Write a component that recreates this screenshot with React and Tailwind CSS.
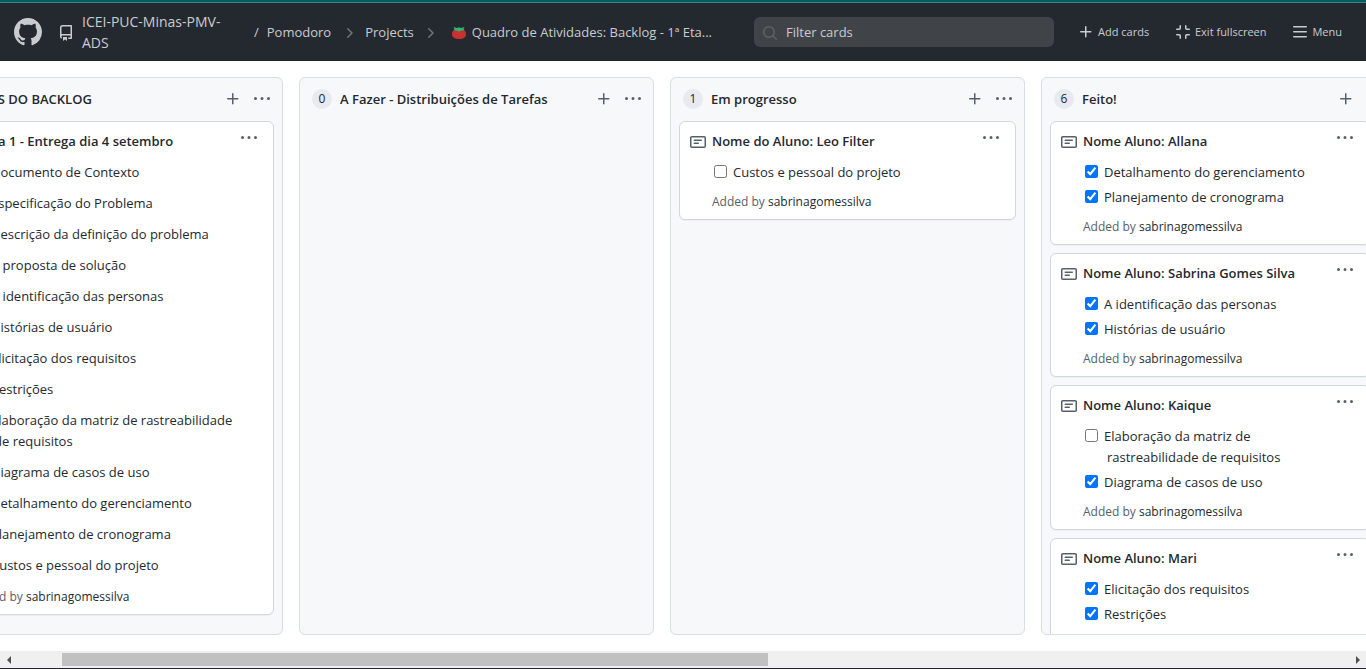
import React from "react";

const PATHS = {
  github:
    "M8 0C3.58 0 0 3.58 0 8c0 3.54 2.29 6.53 5.47 7.59.4.07.55-.17.55-.38 0-.19-.01-.82-.01-1.49-2.01.37-2.53-.49-2.69-.94-.09-.23-.48-.94-.82-1.13-.28-.15-.68-.52-.01-.53.63-.01 1.08.58 1.23.82.72 1.21 1.87.87 2.33.66.07-.52.28-.87.51-1.07-1.78-.2-3.64-.89-3.64-3.95 0-.87.31-1.59.82-2.15-.08-.2-.36-1.02.08-2.12 0 0 .67-.21 2.2.82.64-.18 1.32-.27 2-.27.68 0 1.36.09 2 .27 1.53-1.04 2.2-.82 2.2-.82.44 1.1.16 1.92.08 2.12.51.56.82 1.27.82 2.15 0 3.07-1.87 3.75-3.65 3.95.29.25.54.73.54 1.48 0 1.07-.01 1.93-.01 2.2 0 .21.15.46.55.38A8.013 8.013 0 0016 8c0-4.42-3.58-8-8-8z",
  repo:
    "M2 2.5A2.5 2.5 0 014.5 0h8.75a.75.75 0 01.75.75v12.5a.75.75 0 01-.75.75h-2.5a.75.75 0 110-1.5h1.75v-2h-8a1 1 0 00-.714 1.7.75.75 0 01-1.072 1.05A2.495 2.495 0 012 11.5v-9zm10.5-1V9h-8c-.356 0-.694.074-1 .208V2.5a1 1 0 011-1h8zM5 12.25v3.25a.25.25 0 00.4.2l1.45-1.087a.25.25 0 01.3 0L8.6 15.7a.25.25 0 00.4-.2v-3.25a.25.25 0 00-.25-.25h-3.5a.25.25 0 00-.25.25z",
  plus:
    "M7.75 2a.75.75 0 01.75.75V7h4.25a.75.75 0 110 1.5H8.5v4.25a.75.75 0 11-1.5 0V8.5H2.75a.75.75 0 010-1.5H7V2.75A.75.75 0 017.75 2z",
  kebab:
    "M8 9a1.5 1.5 0 100-3 1.5 1.5 0 000 3zM1.5 9a1.5 1.5 0 100-3 1.5 1.5 0 000 3zm13 0a1.5 1.5 0 100-3 1.5 1.5 0 000 3z",
  note:
    "M0 3.75C0 2.784.784 2 1.75 2h12.5c.966 0 1.75.784 1.75 1.75v8.5A1.75 1.75 0 0114.25 14H1.75A1.75 1.75 0 010 12.25v-8.5zm1.75-.25a.25.25 0 00-.25.25v8.5c0 .138.112.25.25.25h12.5a.25.25 0 00.25-.25v-8.5a.25.25 0 00-.25-.25H1.75zM3.5 6.25a.75.75 0 01.75-.75h7a.75.75 0 010 1.5h-7a.75.75 0 01-.75-.75zm.75 2.25a.75.75 0 000 1.5h4a.75.75 0 000-1.5h-4z",
  search:
    "M11.5 7a4.499 4.499 0 11-8.998 0A4.499 4.499 0 0111.5 7zm-.82 4.74a6 6 0 111.06-1.06l3.04 3.04a.75.75 0 11-1.06 1.06l-3.04-3.04z",
  exit:
    "M10.75 1a.75.75 0 01.75.75v2.5c0 .138.112.25.25.25h2.5a.75.75 0 010 1.5h-2.5A1.75 1.75 0 0110 4.25v-2.5a.75.75 0 01.75-.75zm-5.5 0a.75.75 0 01.75.75v2.5A1.75 1.75 0 014.25 6h-2.5a.75.75 0 010-1.5h2.5a.25.25 0 00.25-.25v-2.5A.75.75 0 015.25 1zM1 10.75a.75.75 0 01.75-.75h2.5c.966 0 1.75.784 1.75 1.75v2.5a.75.75 0 01-1.5 0v-2.5a.25.25 0 00-.25-.25h-2.5a.75.75 0 01-.75-.75zm9 1c0-.966.784-1.75 1.75-1.75h2.5a.75.75 0 010 1.5h-2.5a.25.25 0 00-.25.25v2.5a.75.75 0 01-1.5 0v-2.5z",
  bars:
    "M1 2.75A.75.75 0 011.75 2h12.5a.75.75 0 110 1.5H1.75A.75.75 0 011 2.75zm0 5A.75.75 0 011.75 7h12.5a.75.75 0 110 1.5H1.75A.75.75 0 011 7.75zM1.75 12a.75.75 0 100 1.5h12.5a.75.75 0 100-1.5H1.75z",
  chevron:
    "M6.22 3.22a.75.75 0 011.06 0l4.25 4.25a.75.75 0 010 1.06l-4.25 4.25a.75.75 0 01-1.06-1.06L9.94 8 6.22 4.28a.75.75 0 010-1.06z",
};

function Icon({ name, className = "size-4" }) {
  return (
    <svg viewBox="0 0 16 16" fill="currentColor" aria-hidden="true" className={`shrink-0 ${className}`}>
      <path fillRule="evenodd" d={PATHS[name]} />
    </svg>
  );
}

function Tomato() {
  return (
    <svg viewBox="0 0 14 12" aria-hidden="true" className="h-3 w-3.5 shrink-0">
      <path d="M0 7C0 4.500 1.500 3 4 3h6c2.500 0 4 1.500 4 4 0 3.200-2.400 5-7 5S0 10.200 0 7z" fill="#c6322f" />
      <path d="M1.500 0 5 1 7 .3l2 .7 3.500-1-1 1.900 1.200 1.700-3-.2L7 4.600 4.500 3.400l-3.200.2 1.200-1.700z" fill="#2fb574" />
    </svg>
  );
}

const COLUMNS = [
  {
    count: 1,
    title: "ITENS DO BACKLOG",
    cards: [
      {
        title: "Etapa 1 - Entrega dia 4 setembro",
        loose: true,
        tasks: [
          ["Documento de Contexto", false],
          ["Especificação do Problema", false],
          ["Descrição da definição do problema", false],
          ["A proposta de solução", false],
          ["A identificação das personas", false],
          ["Histórias de usuário", false],
          ["Elicitação dos requisitos", false],
          ["Restrições", false],
          ["Elaboração da matriz de rastreabilidade de requisitos", false],
          ["Diagrama de casos de uso", false],
          ["Detalhamento do gerenciamento", false],
          ["Planejamento de cronograma", false],
          ["Custos e pessoal do projeto", false],
        ],
      },
    ],
  },
  { count: 0, title: "A Fazer - Distribuições de Tarefas", cards: [] },
  {
    count: 1,
    title: "Em progresso",
    cards: [{ title: "Nome do Aluno: Leo Filter", tasks: [["Custos e pessoal do projeto", false]] }],
  },
  {
    count: 6,
    title: "Feito!",
    scrolls: true,
    cards: [
      {
        title: "Nome Aluno: Allana",
        tasks: [
          ["Detalhamento do gerenciamento", true],
          ["Planejamento de cronograma", true],
        ],
      },
      {
        title: "Nome Aluno: Sabrina Gomes Silva",
        tasks: [
          ["A identificação das personas", true],
          ["Histórias de usuário", true],
        ],
      },
      {
        title: "Nome Aluno: Kaique",
        tasks: [
          ["Elaboração da matriz de rastreabilidade de requisitos", false],
          ["Diagrama de casos de uso", true],
        ],
      },
      {
        title: "Nome Aluno: Mari",
        tasks: [
          ["Elicitação dos requisitos", true],
          ["Restrições", true],
        ],
      },
    ],
  },
];

function Card({ card }) {
  return (
    <article className="flex shrink-0 rounded-md border border-[#d0d7de] bg-white px-2.5 py-2 shadow-[0_1px_0_rgba(27,31,36,0.04)]">
      <Icon name="note" className="mt-1 size-4 text-[#57606a]" />
      <div className="ml-1.5 min-w-0 flex-1">
        <h3 className="mt-px text-[13px] leading-[21px] font-semibold">{card.title}</h3>
        <ul className={card.loose ? "mt-2.5 space-y-2.5" : "mt-2.5 space-y-1"}>
          {card.tasks.map(([text, done]) => (
            <li key={text}>
              <label className="block pl-6 -indent-6 text-[13px] leading-[21px]">
                <input type="checkbox" defaultChecked={done} className="mr-1.5 ml-0.5 size-[13px] align-[-1px]" />
                {text}
              </label>
            </li>
          ))}
        </ul>
        <p className={`text-xs leading-[18px] text-[#57606a] ${card.loose ? "mt-3" : "mt-2.5"}`}>
          Added by{" "}
          <a href="#sabrinagomessilva" className="text-[#24292f]">
            sabrinagomessilva
          </a>
        </p>
      </div>
      <button type="button" aria-label="Card menu" className="mr-1.5 h-4 text-[#57606a]">
        <Icon name="kebab" />
      </button>
    </article>
  );
}

function Column({ column }) {
  return (
    <section className="flex w-[355px] shrink-0 flex-col overflow-hidden rounded-md border border-[#d8dee4] bg-[#f6f8fa]">
      <header className="mb-0.5 flex h-[41px] shrink-0 items-center px-3">
        <span className="flex h-5 min-w-5 items-center justify-center rounded-full bg-[#e7eaee] px-1.5 text-xs font-medium">
          {column.count}
        </span>
        <h2 className="mt-0.5 ml-2 flex-1 truncate text-[13px] leading-[21px] font-semibold">{column.title}</h2>
        <button type="button" aria-label="Add a note" className="text-[#57606a]">
          <Icon name="plus" />
        </button>
        <button type="button" aria-label="Column menu" className="ml-[13px] text-[#57606a]">
          <Icon name="kebab" />
        </button>
      </header>
      <div className={`flex min-h-0 flex-1 flex-col gap-2 overflow-hidden pl-2 ${column.scrolls ? "pr-[25px]" : "pr-2"}`}>
        {column.cards.map((card) => (
          <Card key={card.title} card={card} />
        ))}
      </div>
    </section>
  );
}

function TopBar() {
  return (
    <header className="flex h-[61px] shrink-0 items-center border-t-2 border-[#035c5e] bg-[#24292f] pt-px pr-6 pl-3.5 text-[13px] text-[#c9cccf] shadow-[inset_0_1px_0_#3f8388]">
      <a href="#home" aria-label="GitHub" className="shrink-0">
        <Icon name="github" className="size-7" />
      </a>
      <nav aria-label="Breadcrumb" className="ml-4 flex min-w-0 flex-1 items-center">
        <Icon name="repo" className="mt-0.5 size-4" />
        <a href="#owner" className="ml-2 w-[172px] shrink-0 pr-6 text-sm leading-[21px]">
          ICEI-PUC-Minas-PMV-ADS
        </a>
        <div className="flex min-w-0 items-center pt-0.5">
          <span>/</span>
          <a href="#pomodoro" className="ml-2">Pomodoro</a>
          <Icon name="chevron" className="mr-2 ml-2.5 size-4 text-[#6e7479]" />
          <a href="#projects">Projects</a>
          <Icon name="chevron" className="mx-2 size-4 text-[#6e7479]" />
          <a href="#board" className="ml-1.5 flex min-w-0 items-center gap-1.5">
            <Tomato />
            <span className="truncate">Quadro de Atividades: Backlog - 1ª Eta...</span>
          </a>
        </div>
      </nav>
      <label className="ml-8 flex h-[30px] w-[300px] shrink-0 items-center rounded-md bg-[#404448] px-2">
        <Icon name="search" className="mt-0.5 size-4 text-[#5c6165]" />
        <input
          type="text"
          aria-label="Filter cards"
          placeholder="Filter cards"
          className="mt-0.5 ml-2 min-w-0 flex-1 bg-transparent outline-none placeholder:text-[#c9cccf]"
        />
      </label>
      <div className="ml-6 flex w-[264px] shrink-0 items-center justify-between text-[11px]">
        <button type="button" className="flex items-center gap-1">
          <Icon name="plus" /> Add cards
        </button>
        <button type="button" className="flex items-center gap-1">
          <Icon name="exit" /> Exit fullscreen
        </button>
        <button type="button" className="flex items-center gap-1">
          <Icon name="bars" /> Menu
        </button>
      </div>
    </header>
  );
}

function ScrollBar() {
  return (
    <div className="flex h-[18px] shrink-0 items-center border-b border-[#24292f] bg-[#f0f0f0]">
      <button type="button" aria-label="Scroll left" className="flex w-[17px] justify-center text-[#505050]">
        <svg viewBox="0 0 4 8" fill="currentColor" className="h-2 w-1">
          <path d="M4 0v8L0 4z" />
        </svg>
      </button>
      <div className="flex flex-1">
        <div className="ml-[45px] h-[13px] w-[53%] bg-[#c1c1c1]" />
      </div>
      <button type="button" aria-label="Scroll right" className="flex w-[17px] justify-center text-[#505050]">
        <svg viewBox="0 0 4 8" fill="currentColor" className="h-2 w-1">
          <path d="M0 0v8l4-4z" />
        </svg>
      </button>
    </div>
  );
}

export default function App() {
  return (
    <div className="flex h-screen flex-col overflow-hidden bg-white font-['Open_Sans',sans-serif] text-[#24292f]">
      <TopBar />
      <main className="flex min-h-0 flex-1 overflow-hidden py-4">
        <div className="-ml-[72px] flex gap-4">
          {COLUMNS.map((column) => (
            <Column key={column.title} column={column} />
          ))}
        </div>
      </main>
      <ScrollBar />
    </div>
  );
}
